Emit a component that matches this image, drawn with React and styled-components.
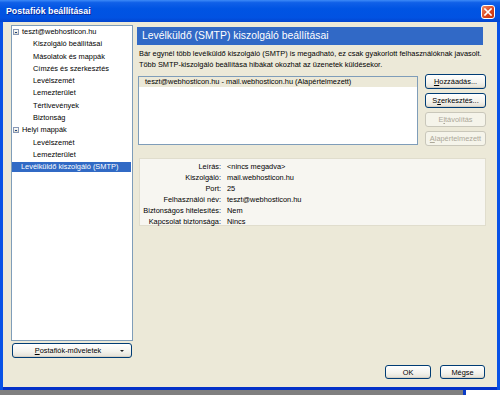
import React from 'react';
import styled, { createGlobalStyle, css } from 'styled-components';

const Global = createGlobalStyle`
  html, body { margin: 0; padding: 0; }
  body {
    width: 500px; height: 395px; overflow: hidden; background: #ffffff;
    font-family: "Liberation Sans", Arial, sans-serif;
    font-size: 7.4px; color: #000;
  }
`;

const Screen = styled.div`
  width: 500px; height: 395px; display: flex; flex-direction: column;
`;

const Window = styled.div`
  height: 390px; display: flex; flex-direction: column;
  background: #0852E6;
`;

const TitleBar = styled.div`
  height: 22px; flex: 0 0 22px; display: flex; align-items: center;
  padding: 0 5px 0 6px;
  background: linear-gradient(#3D8AF7 0%, #1060E8 12%, #0054E3 40%, #0152E2 80%, #0245D0 100%);
`;

const Title = styled.div`
  flex: 1; color: #fff; font-weight: bold; font-size: 8.8px;
  text-shadow: 1px 1px 0 #0A2A9C;
`;

const CloseButton = styled.div`
  width: 14px; height: 14px; box-sizing: border-box; border: 1px solid #fff;
  border-radius: 3px; background: linear-gradient(135deg, #F08A64, #D8421A 60%, #C33510);
  display: flex; align-items: center; justify-content: center;
  margin-top: 1px;
`;

const Body = styled.div`
  flex: 1; display: flex; flex-direction: column; min-height: 0;
  margin: 0 3px 3px 3px; background: #ECE9D8;
  padding: 3px 11px 8px 8px;
  box-shadow: 0 3px 0 #0431C8;
`;

const Main = styled.div`
  flex: 1; display: flex; gap: 4px; min-height: 0;
`;

const LeftCol = styled.div`
  width: 122px; display: flex; flex-direction: column;
`;

const TreeBox = styled.div`
  flex: 1; background: #fff; border: 1px solid #7F9DB9; padding-top: 1px;
`;

const TreeRow = styled.div`
  height: 10px; line-height: 10px; margin: 0 1px 2.3px 0;
  display: flex; align-items: center; white-space: nowrap;
  padding-left: ${p => p.$indent}px;
  ${p => p.$selected && css`background: #316AC5; color: #fff;`}
`;

const Expander = styled.span`
  width: 6px; height: 6px; box-sizing: border-box; border: 1px solid #8899B6;
  background: linear-gradient(#fff, #DCD9CC); margin-right: 3px;
  display: inline-flex; align-items: center; justify-content: center;
  &::after { content: ""; width: 2px; height: 1px; background: #1F3F7A; }
`;

const Btn = styled.div`
  box-sizing: border-box; height: ${p => p.$h || 15}px;
  width: ${p => (p.$w ? `${p.$w}px` : 'auto')};
  border: 1px solid ${p => (p.$disabled ? '#C9C7BA' : '#003C74')};
  border-radius: 3px;
  background: ${p => (p.$disabled ? '#F5F4EA' : 'linear-gradient(#FFFFFF 0%, #F3F2EC 60%, #E3E0D5 100%)')};
  color: ${p => (p.$disabled ? '#ACA899' : '#000')};
  display: flex; align-items: center; justify-content: center;
  white-space: nowrap;
  box-shadow: ${p => (p.$disabled ? 'none' : 'inset 0 -1px 0 #D6D0C5')};
`;

const AccountButton = styled(Btn)`
  margin: 2px 0 0 1px; width: 120px; justify-content: flex-start; padding-right: 4px;
`;

const AccLabel = styled.span`
  flex: 1; text-align: center; padding-left: 6px;
`;

const Arrow = styled.span`
  width: 10px; display: flex; justify-content: center;
  &::after { content: ""; border-left: 2px solid transparent; border-right: 2px solid transparent; border-top: 2px solid #222; }
`;

const Key = styled.u`
  text-decoration: underline;
`;

const RightCol = styled.div`
  flex: 1; display: flex; flex-direction: column; min-width: 0;
`;

const Header = styled.div`
  margin-top: 2px; height: 18px; line-height: 18px; margin-right: 3px;
  background: #3169C6; color: #fff; font-size: 10.4px; padding-left: 5px;
`;

const Desc = styled.p`
  margin: 3px 0 0 2px; line-height: 11px; white-space: nowrap;
`;

const ListRow = styled.div`
  margin-top: 4px; display: flex; gap: 7px;
`;

const ListBox = styled.div`
  margin: 2px 0 0 1px; width: 280px; height: 69px; box-sizing: border-box;
  border: 1px solid #7F9DB9; background: #fff;
`;

const ListItem = styled.div`
  height: 10px; line-height: 10px; padding-left: 6px; white-space: nowrap;
  background: ${p => (p.$selected ? '#ECE9D8' : 'transparent')};
`;

const ButtonCol = styled.div`
  width: 61px; display: flex; flex-direction: column; gap: 4px;
`;

const Details = styled.div`
  margin: 12px 0 0 2px; height: 68px; box-sizing: border-box;
  border: 1px solid #E0DDCD; background: #F7F6F1;
  display: grid; grid-template-columns: 81px 1fr; column-gap: 6px;
  grid-auto-rows: 11.2px; align-content: start; padding-top: 1.5px;
`;

const Label = styled.div`
  text-align: right; line-height: 11.2px; white-space: nowrap;
`;

const Value = styled.div`
  line-height: 11.2px; white-space: nowrap;
`;

const Footer = styled.div`
  margin-top: 7px; display: flex; justify-content: flex-end; gap: 9px; padding-right: 1px;
`;

const Desktop = styled.div`
  flex: 1; display: flex;
`;

const DeskPart = styled.div`
  width: ${p => (p.$w ? `${p.$w}px` : 'auto')}; flex: ${p => (p.$w ? 'none' : 1)};
  background: ${p => p.$bg};
`;

const tree = [
  { t: 'teszt@webhosticon.hu', indent: 1, exp: true },
  { t: 'Kiszolgáló beállításai', indent: 21 },
  { t: 'Másolatok és mappák', indent: 21 },
  { t: 'Címzés és szerkesztés', indent: 21 },
  { t: 'Levélszemét', indent: 21 },
  { t: 'Lemezterület', indent: 21 },
  { t: 'Tértivevények', indent: 21 },
  { t: 'Biztonság', indent: 21 },
  { t: 'Helyi mappák', indent: 1, exp: true },
  { t: 'Levélszemét', indent: 21 },
  { t: 'Lemezterület', indent: 21 },
  { t: 'Levélküldő kiszolgáló (SMTP)', indent: 9, sel: true },
];

const details = [
  ['Leírás:', '<nincs megadva>'],
  ['Kiszolgáló:', 'mail.webhosticon.hu'],
  ['Port:', '25'],
  ['Felhasználói név:', 'teszt@webhosticon.hu'],
  ['Biztonságos hitelesítés:', 'Nem'],
  ['Kapcsolat biztonsága:', 'Nincs'],
];

export default function App() {
  return (
    <Screen>
      <Global />
      <Window>
        <TitleBar>
          <Title>Postafiók beállításai</Title>
          <CloseButton>
            <svg width="8" height="8" viewBox="0 0 8 8">
              <path d="M1 1 L7 7 M7 1 L1 7" stroke="#fff" strokeWidth="1.6" strokeLinecap="square" />
            </svg>
          </CloseButton>
        </TitleBar>
        <Body>
          <Main>
            <LeftCol>
              <TreeBox>
                {tree.map((r, i) => (
                  <TreeRow key={i} $indent={r.indent} $selected={r.sel}>
                    {r.exp && <Expander />}
                    {r.t}
                  </TreeRow>
                ))}
              </TreeBox>
              <AccountButton>
                <AccLabel><Key>P</Key>ostafiók-műveletek</AccLabel>
                <Arrow />
              </AccountButton>
            </LeftCol>
            <RightCol>
              <Header>Levélküldő (SMTP) kiszolgáló beállításai</Header>
              <Desc>
                Bár egynél több levélküldő kiszolgáló (SMTP) is megadható, ez csak gyakorlott felhasználóknak javasolt.
                <br />
                Több SMTP-kiszolgáló beállítása hibákat okozhat az üzenetek küldésekor.
              </Desc>
              <ListRow>
                <ListBox>
                  <ListItem $selected>teszt@webhosticon.hu - mail.webhosticon.hu (Alapértelmezett)</ListItem>
                </ListBox>
                <ButtonCol>
                  <Btn><Key>H</Key>ozzáadás...</Btn>
                  <Btn>S<Key>z</Key>erkesztés...</Btn>
                  <Btn $disabled>E<Key>l</Key>távolítás</Btn>
                  <Btn $disabled><Key>A</Key>lapértelmezett</Btn>
                </ButtonCol>
              </ListRow>
              <Details>
                {details.map(([l, v]) => (
                  <React.Fragment key={l}>
                    <Label>{l}</Label>
                    <Value>{v}</Value>
                  </React.Fragment>
                ))}
              </Details>
            </RightCol>
          </Main>
          <Footer>
            <Btn $w={46} $h={14}>OK</Btn>
            <Btn $w={45} $h={14}>Mégse</Btn>
          </Footer>
        </Body>
      </Window>
      <Desktop>
        <DeskPart $w={463} $bg="#808080" />
        <DeskPart $w={3} $bg="#0A3CC8" />
        <DeskPart $bg="#FFFFFF" />
      </Desktop>
    </Screen>
  );
}
